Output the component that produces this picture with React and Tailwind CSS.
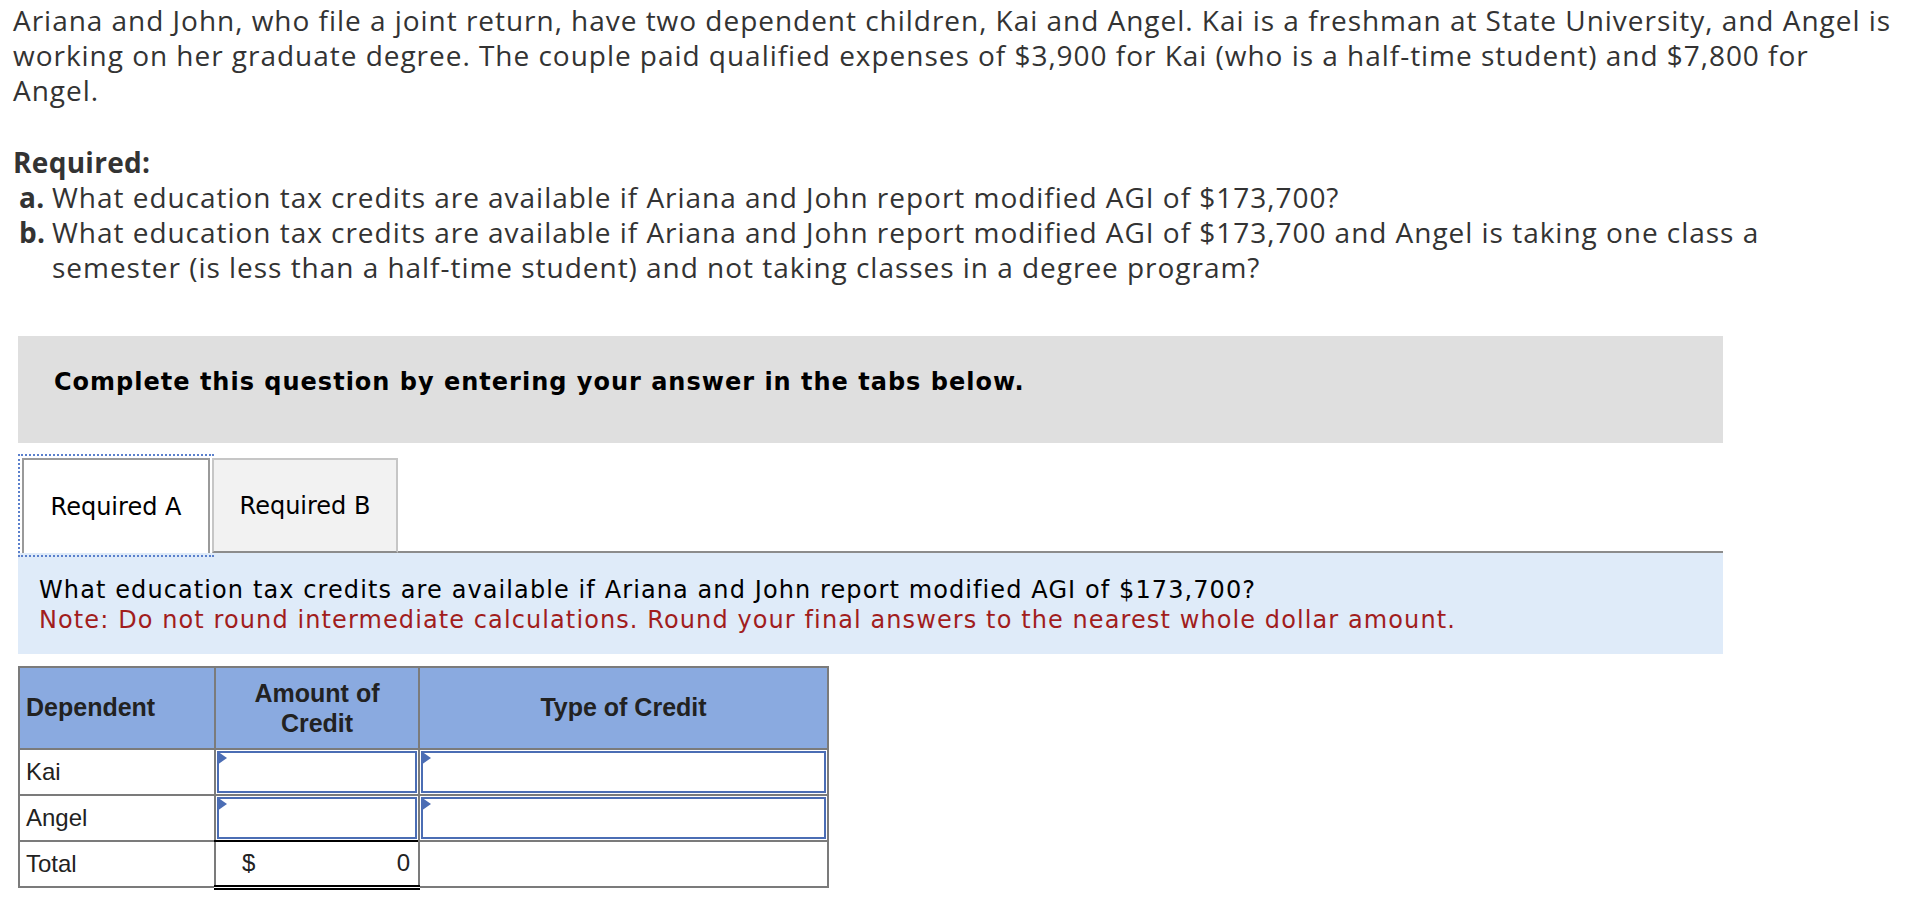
import React from "react";

function InputCell() {
  return (
    <td className="p-0 border-2 border-[#7b7b7b] align-top">
      <div className="relative m-[1px] h-[42px] border-2 border-[#4b6db4] bg-white">
        <svg className="absolute left-[-2px] top-[-2px]" width="10" height="14" viewBox="0 0 10 14">
          <polygon points="0,0 10,7 0,14" fill="#4b6db4" />
        </svg>
      </div>
    </td>
  );
}

export default function App() {
  return (
    <div className="w-[1922px] min-h-[904px] bg-white text-[#333]">
      <div className="pl-[13px] pt-[3px] font-['Open_Sans',sans-serif] text-[28px] leading-[35px] tracking-[0.97px]">
        <p>
          Ariana and John, who file a joint return, have two dependent children, Kai and Angel. Kai is a freshman at State University, and Angel is
          <br />
          working on her graduate degree. The couple paid qualified expenses of $3,900 for Kai (who is a half-time student) and $7,800 for
          <br />
          Angel.
        </p>
        <p className="mt-[37px] font-bold leading-[35px] tracking-[0.3px]">Required:</p>
        <div className="pl-[6px] leading-[35px]">
          <div className="flex">
            <span className="w-[33px] font-bold tracking-[0.3px]">a.</span>
            <span>What education tax credits are available if Ariana and John report modified AGI of $173,700?</span>
          </div>
          <div className="flex">
            <span className="w-[33px] shrink-0 font-bold tracking-[0.3px]">b.</span>
            <span>
              What education tax credits are available if Ariana and John report modified AGI of $173,700 and Angel is taking one class a
              <br />
              semester (is less than a half-time student) and not taking classes in a degree program?
            </span>
          </div>
        </div>
      </div>

      <div className="ml-[18px] w-[1705px] font-['DejaVu_Sans',Verdana,sans-serif]">
        <div className="mt-[51px] h-[107px] bg-[#dfdfdf] pl-[36px] pt-[31px] text-[24px] leading-[30px] tracking-[1px] font-bold text-black">
          Complete this question by entering your answer in the tabs below.
        </div>

        <div className="mt-[15px] flex h-[95px] pl-[4px] text-[24px] text-black">
          <div className="flex w-[188px] items-center justify-center border-2 border-b-0 border-[#9a9a9a] bg-white outline-2 outline-dotted outline-offset-2 outline-[#5b80cc]">
            Required A
          </div>
          <div className="ml-[2px] flex w-[186px] items-center justify-center border-2 border-[#c6c6c6] border-b-[#8c8c8c] bg-[#f2f2f2]">
            Required B
          </div>
          <div className="flex-1 border-b-2 border-[#8c8c8c]"></div>
        </div>

        <div className="h-[101px] bg-[#dfebf9] pl-[21px] pt-[22px] text-[24px] leading-[30px] tracking-[1.1px]">
          <p className="text-black">What education tax credits are available if Ariana and John report modified AGI of $173,700?</p>
          <p className="text-[#a11d1d]">Note: Do not round intermediate calculations. Round your final answers to the nearest whole dollar amount.</p>
        </div>
      </div>

      <table className="ml-[18px] mt-[12px] border-collapse font-['Liberation_Sans',Arial,sans-serif] text-[24px] text-[#222]">
        <thead>
          <tr className="h-[82px] bg-[#8aaae0]">
            <th className="w-[196px] border-2 border-[#7b7b7b] px-[6px] text-left text-[25px] font-bold">Dependent</th>
            <th className="w-[204px] border-2 border-[#7b7b7b] text-center text-[25px] leading-[30px] font-bold">
              Amount of
              <br />
              Credit
            </th>
            <th className="w-[409px] border-2 border-[#7b7b7b] text-center text-[25px] font-bold">Type of Credit</th>
          </tr>
        </thead>
        <tbody>
          <tr className="h-[46px]">
            <td className="border-2 border-[#7b7b7b] px-[6px]">Kai</td>
            <InputCell />
            <InputCell />
          </tr>
          <tr className="h-[46px]">
            <td className="border-2 border-[#7b7b7b] px-[6px]">Angel</td>
            <InputCell />
            <InputCell />
          </tr>
          <tr className="h-[46px]">
            <td className="border-2 border-[#7b7b7b] px-[6px]">Total</td>
            <td className="border-2 border-t-black border-b-[5px] border-b-black border-double border-x-[#7b7b7b] p-0">
              <div className="flex justify-between pl-[26px] pr-[8px]">
                <span>$</span>
                <span>0</span>
              </div>
            </td>
            <td className="border-2 border-[#7b7b7b]"></td>
          </tr>
        </tbody>
      </table>
    </div>
  );
}
